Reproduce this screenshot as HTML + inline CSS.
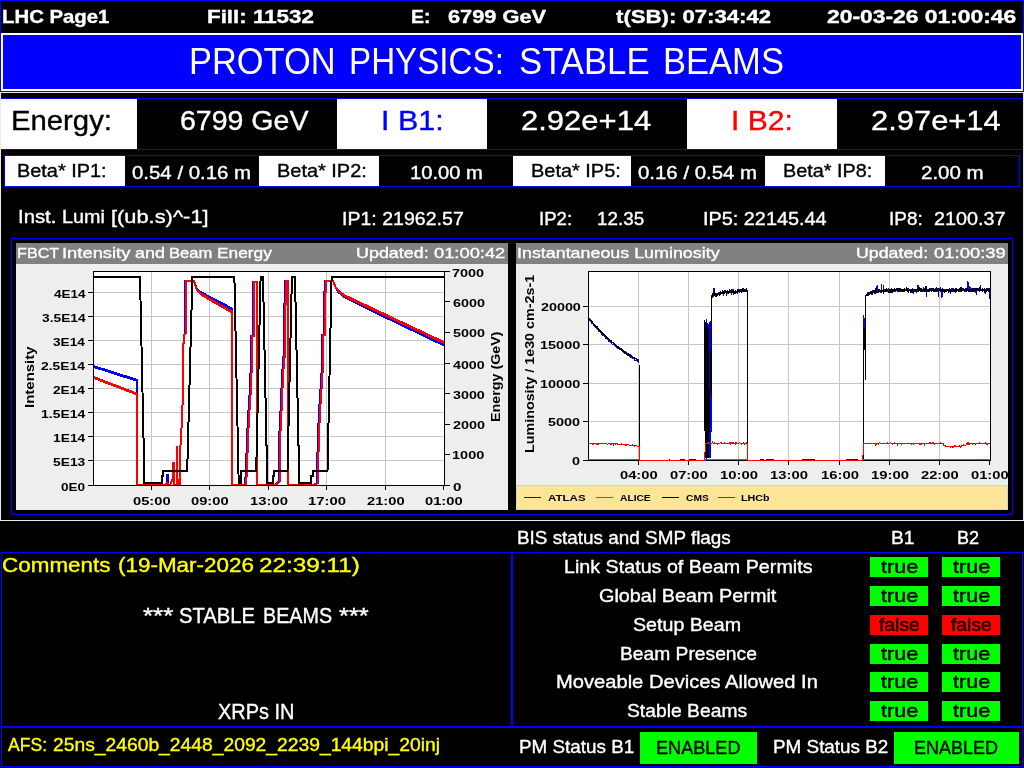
<!DOCTYPE html>
<html><head><meta charset="utf-8"><title>LHC Page1</title>
<style>
html,body{margin:0;padding:0;background:#000;overflow:hidden}
body{width:1024px;height:768px;position:relative;font-family:"Liberation Sans",sans-serif}
.b{position:absolute;box-sizing:content-box}
.t{position:absolute;white-space:pre;line-height:1;transform-origin:0 0;font-family:"Liberation Sans",sans-serif;-webkit-text-stroke:0.35px currentColor}
svg{position:absolute;left:0;top:0}
</style></head><body>
<div class="b " style="left:0px;top:0px;width:1024px;height:92px;background:#00f"></div>
<div class="b " style="left:1px;top:1px;width:1022px;height:32px;background:#000"></div>
<div class="b " style="left:1px;top:33px;width:1018px;height:54px;background:#00f;border:2px solid #fff"></div>
<div class="b " style="left:0px;top:92px;width:1022px;height:427px;background:#000;border:1px solid #e9e9e9"></div>
<div class="b " style="left:1px;top:98px;width:1022px;height:50px;background:#000;border:solid #00f;border-width:1px 0"></div>
<div class="b " style="left:1px;top:99px;width:136px;height:50px;background:#fff"></div>
<div class="b " style="left:337px;top:99px;width:150px;height:50px;background:#fff"></div>
<div class="b " style="left:687px;top:99px;width:150px;height:50px;background:#fff"></div>
<div class="b " style="left:4px;top:155px;width:1014px;height:30px;border:1px solid #00f"></div>
<div class="b " style="left:5px;top:156px;width:120px;height:30px;background:#fff"></div>
<div class="b " style="left:259px;top:156px;width:120px;height:30px;background:#fff"></div>
<div class="b " style="left:513px;top:156px;width:118px;height:30px;background:#fff"></div>
<div class="b " style="left:765px;top:156px;width:120px;height:30px;background:#fff"></div>
<div class="b " style="left:11px;top:238px;width:1000px;height:275px;border:1px solid #00f"></div>
<div class="b " style="left:16px;top:243px;width:492px;height:21px;background:#828082"></div>
<div class="b " style="left:16px;top:264px;width:492px;height:246px;background:#eeeeee"></div>
<div class="b " style="left:516px;top:243px;width:492px;height:21px;background:#828082"></div>
<div class="b " style="left:516px;top:264px;width:492px;height:246px;background:#eeeeee"></div>
<div class="b " style="left:516px;top:485px;width:490px;height:23px;background:#fce596;border:1px solid #c9d3e6"></div>
<div class="b " style="left:1px;top:552px;width:509px;height:173px;border:1px solid #00f"></div>
<div class="b " style="left:1px;top:727px;width:1020px;height:38px;border:1px solid #00f"></div>
<div class="b " style="left:512px;top:552px;width:509px;height:173px;border:1px solid #00f"></div>
<div class="b " style="left:870px;top:557px;width:58px;height:20px;background:#0f0"></div>
<div class="b " style="left:942px;top:557px;width:58px;height:20px;background:#0f0"></div>
<div class="b " style="left:870px;top:586px;width:58px;height:20px;background:#0f0"></div>
<div class="b " style="left:942px;top:586px;width:58px;height:20px;background:#0f0"></div>
<div class="b " style="left:870px;top:615px;width:58px;height:20px;background:#f00"></div>
<div class="b " style="left:942px;top:615px;width:58px;height:20px;background:#f00"></div>
<div class="b " style="left:870px;top:644px;width:58px;height:20px;background:#0f0"></div>
<div class="b " style="left:942px;top:644px;width:58px;height:20px;background:#0f0"></div>
<div class="b " style="left:870px;top:672px;width:58px;height:20px;background:#0f0"></div>
<div class="b " style="left:942px;top:672px;width:58px;height:20px;background:#0f0"></div>
<div class="b " style="left:870px;top:701px;width:58px;height:20px;background:#0f0"></div>
<div class="b " style="left:942px;top:701px;width:58px;height:20px;background:#0f0"></div>
<div class="b " style="left:640px;top:732px;width:117px;height:32px;background:#0f0"></div>
<div class="b " style="left:894px;top:732px;width:125px;height:32px;background:#0f0"></div>
<svg width="1024" height="768" viewBox="0 0 1024 768" shape-rendering="crispEdges">
<g><rect x="93.5" y="271.5" width="351" height="214" fill="#fff" stroke="none"/>
<line x1="94" x2="444" y1="460.5" y2="460.5" stroke="#c6c6c6" stroke-width="1"/>
<line x1="94" x2="444" y1="436.5" y2="436.5" stroke="#c6c6c6" stroke-width="1"/>
<line x1="94" x2="444" y1="412.5" y2="412.5" stroke="#c6c6c6" stroke-width="1"/>
<line x1="94" x2="444" y1="388.5" y2="388.5" stroke="#c6c6c6" stroke-width="1"/>
<line x1="94" x2="444" y1="364.5" y2="364.5" stroke="#c6c6c6" stroke-width="1"/>
<line x1="94" x2="444" y1="340.5" y2="340.5" stroke="#c6c6c6" stroke-width="1"/>
<line x1="94" x2="444" y1="316.5" y2="316.5" stroke="#c6c6c6" stroke-width="1"/>
<line x1="94" x2="444" y1="292.5" y2="292.5" stroke="#c6c6c6" stroke-width="1"/>
<line x1="151.5" x2="151.5" y1="272" y2="485" stroke="#c6c6c6" stroke-width="1"/>
<line x1="209.5" x2="209.5" y1="272" y2="485" stroke="#c6c6c6" stroke-width="1"/>
<line x1="268.5" x2="268.5" y1="272" y2="485" stroke="#c6c6c6" stroke-width="1"/>
<line x1="326.5" x2="326.5" y1="272" y2="485" stroke="#c6c6c6" stroke-width="1"/>
<line x1="385.5" x2="385.5" y1="272" y2="485" stroke="#c6c6c6" stroke-width="1"/>
<polyline points="93.5,366.0 136.5,379.7 136.5,485.0 165.0,485.0 167.0,482.5 169.0,485.0 170.0,485.0 173.0,478.0 173.5,462.5 174.3,462.5 174.5,485.0 176.8,485.0 177.0,446.0 177.6,485.0 179.8,485.0 180.6,440.0 181.9,423.0 183.1,388.0 183.6,335.0 185.3,333.0 185.5,281.0 194.0,281.0 196.6,288.7 201.0,292.2 208.3,296.1 220.0,302.1 232.0,308.6 232.0,485.0 244.6,485.0 245.9,474.0 246.9,439.0 248.4,412.0 249.6,394.0 250.9,364.0 250.9,335.5 253.4,335.5 253.4,281.5 257.2,281.5 257.2,485.0 275.2,485.0 279.0,481.5 279.0,439.0 280.0,424.0 281.2,394.0 282.8,364.0 282.8,357.4 284.0,357.4 284.0,304.2 285.2,304.2 285.2,280.8 288.2,280.8 288.2,485.0 313.4,485.0 317.1,482.8 317.1,469.0 317.8,439.0 319.0,411.5 320.2,394.0 322.1,364.0 322.1,335.0 324.0,335.0 324.0,292.4 325.0,292.4 325.0,280.8 333.1,280.8 335.0,286.2 337.5,290.4 343.8,295.9 353.0,300.8 385.0,316.3 444.0,344.6" fill="none" stroke="#00f" stroke-width="2" /><polyline points="93.5,366.9 136.5,380.6" fill="none" stroke="#00f" stroke-width="2" /><polyline points="196.6,289.6 201.0,293.1 208.3,297.0 220.0,303.0 232.0,309.4" fill="none" stroke="#00f" stroke-width="2" /><polyline points="337.5,291.3 343.8,296.8 353.0,301.6 385.0,317.2 444.0,345.5" fill="none" stroke="#00f" stroke-width="2" />
<rect x="166" y="474" width="3" height="10" fill="#00f"/>
<line x1="172.5" x2="172.5" y1="462" y2="476" stroke="#00f" stroke-width="1.6"/>
<polyline points="93.5,377.0 136.5,393.4 136.5,485.0 165.0,485.0 167.0,482.5 169.0,485.0 170.0,485.0 173.0,478.0 173.5,462.5 174.3,462.5 174.5,485.0 176.8,485.0 177.0,446.0 177.6,485.0 179.8,485.0 180.6,440.0 181.9,423.0 183.1,388.0 183.6,335.0 186.3,333.0 186.5,281.0 194.0,281.0 196.6,289.3 201.0,293.5 208.3,298.0 220.0,304.8 232.0,311.8 232.0,485.0 245.6,485.0 246.9,474.0 247.9,439.0 249.4,412.0 250.6,394.0 251.9,364.0 251.9,335.5 253.8,335.5 253.8,281.5 257.2,281.5 257.2,485.0 276.2,485.0 280.0,481.5 280.0,439.0 281.0,424.0 282.2,394.0 283.8,364.0 283.8,357.4 285.0,357.4 285.0,304.2 286.2,304.2 286.2,280.8 288.2,280.8 288.2,485.0 314.4,485.0 318.1,482.8 318.1,469.0 318.8,439.0 320.0,411.5 321.2,394.0 323.1,364.0 323.1,335.0 325.0,335.0 325.0,292.4 326.0,292.4 326.0,280.8 333.1,280.8 335.0,286.0 337.5,289.9 343.8,294.9 353.0,299.2 385.0,314.3 444.0,342.1" fill="none" stroke="#f00" stroke-width="2" /><polyline points="93.5,377.9 136.5,394.3" fill="none" stroke="#f00" stroke-width="2" /><polyline points="196.6,290.2 201.0,294.4 208.3,298.9 220.0,305.7 232.0,312.6" fill="none" stroke="#f00" stroke-width="2" /><polyline points="337.5,290.8 343.8,295.8 353.0,300.1 385.0,315.2 444.0,343.0" fill="none" stroke="#f00" stroke-width="2" />
<polyline points="93.5,277.0 140.0,277.0 144.5,483.0 162.0,483.0 162.0,476.0 163.0,476.0 163.0,470.5 187.2,470.5 192.4,277.0 234.4,277.0 238.7,483.0 241.2,483.0 241.2,470.5 241.2,470.5 241.2,470.5 256.2,470.5 260.6,277.0 263.0,277.0 267.3,483.0 273.0,483.0 273.0,476.0 274.4,476.0 274.4,470.5 287.5,470.5 291.9,277.0 295.0,277.0 299.3,483.0 311.2,483.0 311.2,476.0 312.5,476.0 312.5,470.5 327.5,470.5 331.6,277.0 444.0,277.0" fill="none" stroke="#000" stroke-width="2" />
<rect x="93.5" y="271.5" width="351" height="214" fill="none" stroke="#000" stroke-width="1"/>
<line x1="88" x2="93" y1="485.5" y2="485.5" stroke="#000"/>
<line x1="88" x2="93" y1="460.5" y2="460.5" stroke="#000"/>
<line x1="88" x2="93" y1="436.5" y2="436.5" stroke="#000"/>
<line x1="88" x2="93" y1="412.5" y2="412.5" stroke="#000"/>
<line x1="88" x2="93" y1="388.5" y2="388.5" stroke="#000"/>
<line x1="88" x2="93" y1="364.5" y2="364.5" stroke="#000"/>
<line x1="88" x2="93" y1="340.5" y2="340.5" stroke="#000"/>
<line x1="88" x2="93" y1="316.5" y2="316.5" stroke="#000"/>
<line x1="88" x2="93" y1="292.5" y2="292.5" stroke="#000"/>
<line x1="445" x2="450" y1="485.5" y2="485.5" stroke="#000"/>
<line x1="445" x2="450" y1="454.5" y2="454.5" stroke="#000"/>
<line x1="445" x2="450" y1="424.5" y2="424.5" stroke="#000"/>
<line x1="445" x2="450" y1="393.5" y2="393.5" stroke="#000"/>
<line x1="445" x2="450" y1="363.5" y2="363.5" stroke="#000"/>
<line x1="445" x2="450" y1="332.5" y2="332.5" stroke="#000"/>
<line x1="445" x2="450" y1="301.5" y2="301.5" stroke="#000"/>
<line x1="445" x2="450" y1="271.5" y2="271.5" stroke="#000"/>
<line x1="151.5" x2="151.5" y1="486" y2="490" stroke="#000"/>
<line x1="209.5" x2="209.5" y1="486" y2="490" stroke="#000"/>
<line x1="268.5" x2="268.5" y1="486" y2="490" stroke="#000"/>
<line x1="326.5" x2="326.5" y1="486" y2="490" stroke="#000"/>
<line x1="385.5" x2="385.5" y1="486" y2="490" stroke="#000"/>
<line x1="443.5" x2="443.5" y1="486" y2="490" stroke="#000"/></g>
<g><rect x="588.5" y="271.5" width="402.0" height="189.0" fill="#fff"/>
<line x1="588.5" x2="990.5" y1="421.5" y2="421.5" stroke="#c6c6c6"/>
<line x1="588.5" x2="990.5" y1="383.5" y2="383.5" stroke="#c6c6c6"/>
<line x1="588.5" x2="990.5" y1="344.5" y2="344.5" stroke="#c6c6c6"/>
<line x1="588.5" x2="990.5" y1="306.5" y2="306.5" stroke="#c6c6c6"/>
<line x1="638.5" x2="638.5" y1="271.5" y2="460.5" stroke="#c6c6c6"/>
<line x1="688.5" x2="688.5" y1="271.5" y2="460.5" stroke="#c6c6c6"/>
<line x1="738.5" x2="738.5" y1="271.5" y2="460.5" stroke="#c6c6c6"/>
<line x1="788.5" x2="788.5" y1="271.5" y2="460.5" stroke="#c6c6c6"/>
<line x1="839.5" x2="839.5" y1="271.5" y2="460.5" stroke="#c6c6c6"/>
<line x1="889.5" x2="889.5" y1="271.5" y2="460.5" stroke="#c6c6c6"/>
<line x1="939.5" x2="939.5" y1="271.5" y2="460.5" stroke="#c6c6c6"/>
<rect x="588.5" y="271.5" width="402.0" height="189.0" fill="none" stroke="#000"/>
<polyline points="589.0,319.6 589.5,320.5 590.0,320.8 590.5,321.4 591.0,322.0 591.5,322.8 592.0,323.4 592.5,323.6 593.0,324.1 593.5,324.6 594.0,325.6 594.5,326.1 595.0,326.7 595.5,327.4 596.0,327.8 596.5,327.9 597.0,328.6 597.5,329.8 598.0,330.1 598.5,330.5 599.0,331.4 599.5,331.6 600.0,331.9 600.5,332.7 601.0,332.7 601.5,333.4 602.0,334.7 602.5,334.1 603.0,335.6 603.5,335.2 604.0,336.2 604.5,336.5 605.0,337.1 605.5,337.7 606.0,338.5 606.5,338.8 607.0,338.9 607.5,339.9 608.0,339.9 608.5,340.4 609.0,341.4 609.5,340.8 610.0,341.7 610.5,342.3 611.0,342.7 611.5,343.3 612.0,344.0 612.5,344.0 613.0,344.5 613.5,344.6 614.0,344.9 614.5,345.3 615.0,346.3 615.5,346.3 616.0,346.8 616.5,347.4 617.0,347.5 617.5,347.9 618.0,348.7 618.5,348.8 619.0,348.9 619.5,349.3 620.0,349.8 620.5,349.8 621.0,350.3 621.5,350.4 622.0,351.1 622.5,351.6 623.0,351.8 623.5,352.6 624.0,352.8 624.5,353.0 625.0,353.4 625.5,353.9 626.0,354.2 626.5,354.7 627.0,354.7 627.5,355.3 628.0,355.5 628.5,355.7 629.0,356.3 629.5,356.2 630.0,356.6 630.5,357.0 631.0,357.4 631.5,357.8 632.0,358.1 632.5,358.1 633.0,358.6 633.5,358.7 634.0,358.9 634.5,359.6 635.0,360.4 635.5,360.1 636.0,359.8 636.5,360.9 637.0,360.9 637.5,360.7 638.0,361.4 638.5,362.0 639.0,361.8 639.5,460.5 706.0,460.5 706.0,318.9 706.1,457.5 706.2,322.0 706.4,457.5 706.5,322.0 706.6,457.5 706.8,323.2 706.9,457.5 707.0,323.7 707.1,457.5 707.2,324.2 707.4,457.5 707.5,323.8 707.6,457.5 707.8,322.7 707.9,457.5 708.0,325.4 708.1,457.5 708.2,324.2 708.4,457.5 708.5,325.2 708.6,457.5 708.8,326.2 708.9,457.5 709.0,325.2 709.1,457.5 709.2,324.3 709.4,457.5 709.5,325.3 709.6,457.5 709.8,323.8 709.9,457.5 710.0,322.4 710.1,457.5 710.2,321.6 710.4,457.5 710.5,322.9 710.6,457.5 710.8,321.2 710.9,457.5 711.5,330.0 711.5,296.1 711.5,295.7 711.8,295.6 712.0,296.4 712.2,296.5 712.5,297.1 712.8,295.6 713.0,295.4 713.2,296.1 713.5,295.5 713.8,294.3 714.0,287.6 714.2,295.4 714.5,295.3 714.8,295.1 715.0,294.5 715.2,294.4 715.5,295.4 715.8,294.2 716.0,294.9 716.2,293.1 716.5,293.9 716.8,294.7 717.0,295.0 717.2,293.0 717.5,295.2 717.8,293.3 718.0,294.7 718.2,293.5 718.5,292.9 718.8,293.6 719.0,293.4 719.2,295.2 719.5,292.1 719.8,293.7 720.0,292.8 720.2,293.9 720.5,292.1 720.8,292.6 721.0,292.0 721.2,293.1 721.5,293.1 721.8,293.5 722.0,293.1 722.2,293.1 722.5,293.1 722.8,293.6 723.0,291.7 723.2,296.2 723.5,292.0 723.8,292.6 724.0,292.3 724.2,293.4 724.5,292.9 724.8,292.6 725.0,293.1 725.2,292.5 725.5,291.5 725.8,291.8 726.0,293.1 726.2,293.2 726.5,292.1 726.8,291.7 727.0,290.8 727.2,290.9 727.5,292.3 727.8,293.3 728.0,292.9 728.2,290.7 728.5,292.5 728.8,292.4 729.0,293.1 729.2,291.1 729.5,289.8 729.8,290.4 730.0,292.8 730.2,291.9 730.5,292.0 730.8,292.2 731.0,292.5 731.2,293.4 731.5,293.9 731.8,290.0 732.0,292.0 732.2,290.2 732.5,291.8 732.8,291.3 733.0,289.3 733.2,291.7 733.5,292.9 733.8,291.9 734.0,290.9 734.2,292.0 734.5,292.7 734.8,291.3 735.0,293.2 735.2,291.3 735.5,291.0 735.8,291.1 736.0,292.1 736.2,292.1 736.5,291.3 736.8,291.5 737.0,292.4 737.2,290.8 737.5,291.1 737.8,292.6 738.0,292.4 738.2,292.0 738.5,290.8 738.8,290.7 739.0,292.4 739.2,291.0 739.5,292.6 739.8,290.6 740.0,291.0 740.2,290.8 740.5,289.7 740.8,290.2 741.0,290.0 741.2,290.7 741.5,290.6 741.8,290.3 742.0,292.2 742.2,290.3 742.5,290.1 742.8,292.2 743.0,291.5 743.2,290.8 743.5,290.0 743.8,291.1 744.0,290.7 744.2,291.0 744.5,290.0 744.8,289.3 745.0,290.4 745.2,291.4 745.5,291.3 745.8,291.1 746.0,289.4 746.2,289.5 746.5,291.5 746.8,290.3 747.0,290.5 747.2,289.6 747.5,460.5 863.5,460.5 863.5,315.0 864.6,322.5 865.6,380.0 865.9,295.5 866.5,295.0 866.8,295.1 867.0,294.7 867.2,295.6 867.5,294.4 867.8,292.9 868.0,292.6 868.2,294.9 868.5,293.4 868.8,295.6 869.0,294.0 869.2,292.8 869.5,293.6 869.8,294.7 870.0,293.8 870.2,291.3 870.5,292.4 870.8,293.6 871.0,291.9 871.2,293.1 871.5,293.3 871.8,292.1 872.0,294.5 872.2,293.5 872.5,291.7 872.8,292.5 873.0,291.7 873.2,293.1 873.5,291.7 873.8,292.5 874.0,292.4 874.2,292.8 874.5,293.0 874.8,290.9 875.0,292.6 875.2,292.0 875.5,291.0 875.8,291.7 876.0,291.0 876.2,286.0 876.5,291.3 876.8,292.3 877.0,292.4 877.2,292.0 877.5,285.3 877.8,292.0 878.0,291.4 878.2,290.2 878.5,292.1 878.8,291.2 879.0,291.4 879.2,292.1 879.5,291.8 879.8,290.9 880.0,291.5 880.2,290.9 880.5,292.7 880.8,290.9 881.0,291.7 881.2,290.4 881.5,290.4 881.8,283.7 882.0,290.7 882.2,291.0 882.5,291.1 882.8,291.3 883.0,290.5 883.2,291.5 883.5,285.4 883.8,289.1 884.0,289.4 884.2,291.0 884.5,290.3 884.8,289.8 885.0,288.8 885.2,290.5 885.5,288.9 885.8,290.0 886.0,291.3 886.2,289.9 886.5,290.7 886.8,289.4 887.0,289.7 887.2,290.7 887.5,291.7 887.8,290.3 888.0,290.1 888.2,289.3 888.5,289.0 888.8,291.6 889.0,289.5 889.2,291.2 889.5,290.8 889.8,290.0 890.0,290.2 890.2,290.4 890.5,290.6 890.8,290.2 891.0,290.3 891.2,290.5 891.5,291.5 891.8,289.1 892.0,289.3 892.2,290.5 892.5,290.6 892.8,292.6 893.0,290.6 893.2,291.1 893.5,290.8 893.8,289.3 894.0,289.4 894.2,289.5 894.5,291.2 894.8,290.8 895.0,289.2 895.2,289.2 895.5,290.0 895.8,289.6 896.0,291.0 896.2,290.1 896.5,289.2 896.8,290.4 897.0,291.0 897.2,289.8 897.5,290.3 897.8,291.5 898.0,289.5 898.2,288.6 898.5,288.8 898.8,292.0 899.0,289.5 899.2,290.3 899.5,289.2 899.8,289.6 900.0,292.2 900.2,290.0 900.5,289.4 900.8,291.6 901.0,290.5 901.2,289.3 901.5,291.3 901.8,290.7 902.0,290.6 902.2,291.0 902.5,291.3 902.8,291.9 903.0,289.9 903.2,289.7 903.5,291.0 903.8,289.0 904.0,291.4 904.2,291.3 904.5,289.0 904.8,290.1 905.0,290.0 905.2,289.5 905.5,289.9 905.8,290.2 906.0,289.1 906.2,290.3 906.5,288.8 906.8,289.9 907.0,290.3 907.2,289.8 907.5,290.7 907.8,290.0 908.0,290.3 908.2,289.2 908.5,288.3 908.8,291.0 909.0,291.2 909.2,290.6 909.5,289.0 909.8,291.3 910.0,290.2 910.2,288.7 910.5,290.3 910.8,289.3 911.0,289.5 911.2,290.6 911.5,291.3 911.8,289.3 912.0,290.5 912.2,287.9 912.5,290.7 912.8,289.1 913.0,289.9 913.2,292.5 913.5,289.5 913.8,289.3 914.0,290.1 914.2,291.1 914.5,290.8 914.8,291.8 915.0,288.6 915.2,290.5 915.5,289.8 915.8,289.7 916.0,290.7 916.2,289.7 916.5,290.8 916.8,290.0 917.0,292.5 917.2,290.1 917.5,290.4 917.8,290.7 918.0,285.0 918.2,290.3 918.5,289.9 918.8,289.9 919.0,291.1 919.2,290.5 919.5,289.9 919.8,291.4 920.0,290.0 920.2,291.4 920.5,290.5 920.8,290.8 921.0,288.4 921.2,289.1 921.5,289.8 921.8,290.7 922.0,290.0 922.2,290.6 922.5,290.6 922.8,290.8 923.0,292.0 923.2,290.0 923.5,290.9 923.8,287.0 924.0,289.3 924.2,290.2 924.5,288.9 924.8,289.0 925.0,290.4 925.2,288.3 925.5,288.8 925.8,291.7 926.0,289.6 926.2,290.1 926.5,290.3 926.8,297.0 927.0,289.7 927.2,291.4 927.5,289.9 927.8,290.9 928.0,290.6 928.2,289.4 928.5,289.5 928.8,289.7 929.0,290.8 929.2,291.7 929.5,289.3 929.8,290.7 930.0,289.9 930.2,289.9 930.5,289.2 930.8,291.0 931.0,289.8 931.2,291.9 931.5,288.1 931.8,289.8 932.0,289.8 932.2,290.1 932.5,289.7 932.8,290.9 933.0,289.9 933.2,290.7 933.5,289.4 933.8,289.5 934.0,290.6 934.2,289.1 934.5,290.9 934.8,290.4 935.0,290.5 935.2,290.2 935.5,290.3 935.8,291.1 936.0,290.2 936.2,289.9 936.5,288.3 936.8,288.7 937.0,290.5 937.2,289.3 937.5,290.7 937.8,290.6 938.0,291.6 938.2,296.8 938.5,290.1 938.8,289.9 939.0,290.9 939.2,289.1 939.5,289.0 939.8,291.4 940.0,289.8 940.2,290.1 940.5,286.9 940.8,288.3 941.0,290.9 941.2,289.0 941.5,290.6 941.8,289.7 942.0,298.1 942.2,288.8 942.5,289.8 942.8,288.3 943.0,290.3 943.2,291.3 943.5,289.9 943.8,289.4 944.0,291.8 944.2,289.4 944.5,289.4 944.8,290.9 945.0,288.9 945.2,289.3 945.5,290.3 945.8,290.4 946.0,291.6 946.2,290.8 946.5,289.5 946.8,291.0 947.0,290.2 947.2,290.2 947.5,289.7 947.8,290.3 948.0,290.6 948.2,289.8 948.5,290.4 948.8,289.4 949.0,289.7 949.2,289.4 949.5,288.9 949.8,289.1 950.0,290.7 950.2,289.7 950.5,290.1 950.8,288.8 951.0,290.1 951.2,289.7 951.5,289.4 951.8,288.3 952.0,292.4 952.2,289.8 952.5,289.2 952.8,290.9 953.0,290.7 953.2,288.3 953.5,289.6 953.8,288.5 954.0,289.2 954.2,290.1 954.5,288.9 954.8,290.8 955.0,289.3 955.2,293.2 955.5,289.3 955.8,289.4 956.0,290.8 956.2,289.6 956.5,288.9 956.8,289.3 957.0,289.7 957.2,289.5 957.5,290.4 957.8,290.2 958.0,290.2 958.2,289.5 958.5,290.0 958.8,291.6 959.0,289.2 959.2,290.7 959.5,290.3 959.8,291.6 960.0,291.5 960.2,289.8 960.5,292.3 960.8,289.4 961.0,290.0 961.2,290.4 961.5,288.6 961.8,289.6 962.0,288.6 962.2,290.8 962.5,289.9 962.8,289.6 963.0,289.4 963.2,291.0 963.5,288.9 963.8,288.5 964.0,290.7 964.2,289.2 964.5,289.5 964.8,289.6 965.0,289.5 965.2,291.7 965.5,289.5 965.8,291.1 966.0,290.3 966.2,290.2 966.5,290.5 966.8,288.5 967.0,290.1 967.2,289.4 967.5,288.9 967.8,288.7 968.0,281.2 968.2,290.2 968.5,289.1 968.8,289.5 969.0,285.6 969.2,290.2 969.5,289.5 969.8,290.4 970.0,289.9 970.2,290.3 970.5,289.1 970.8,290.2 971.0,291.0 971.2,290.1 971.5,290.9 971.8,289.0 972.0,289.5 972.2,290.2 972.5,290.0 972.8,289.4 973.0,289.7 973.2,289.2 973.5,288.7 973.8,289.9 974.0,290.3 974.2,291.7 974.5,291.2 974.8,289.6 975.0,290.2 975.2,287.7 975.5,292.6 975.8,289.3 976.0,290.1 976.2,294.8 976.5,290.1 976.8,290.2 977.0,289.8 977.2,289.3 977.5,290.1 977.8,289.7 978.0,289.7 978.2,290.6 978.5,289.9 978.8,288.5 979.0,289.7 979.2,291.2 979.5,290.7 979.8,290.3 980.0,290.0 980.2,288.8 980.5,290.7 980.8,285.3 981.0,290.3 981.2,289.9 981.5,291.0 981.8,289.1 982.0,288.8 982.2,290.2 982.5,290.8 982.8,288.9 983.0,289.4 983.2,290.5 983.5,290.3 983.8,290.9 984.0,289.2 984.2,291.4 984.5,290.4 984.8,289.9 985.0,289.3 985.2,290.4 985.5,291.2 985.8,291.2 986.0,290.9 986.2,289.0 986.5,290.0 986.8,289.1 987.0,288.9 987.2,291.3 987.5,289.0 987.8,291.0 988.0,291.2 988.2,288.2 988.5,288.8 988.8,290.8 989.0,289.5 989.2,290.5 989.5,289.2 989.8,298.7 990.0,289.7" fill="none" stroke="#00f" stroke-width="1" />
<polyline points="589.0,318.1 589.5,318.7 590.0,319.6 590.5,319.7 591.0,321.2 591.5,321.3 592.0,321.9 592.5,322.7 593.0,323.4 593.5,323.8 594.0,324.4 594.5,324.8 595.0,325.4 595.5,326.0 596.0,326.7 596.5,327.4 597.0,327.6 597.5,328.9 598.0,329.0 598.5,330.0 599.0,330.1 599.5,330.3 600.0,331.0 600.5,331.6 601.0,332.4 601.5,332.5 602.0,333.1 602.5,333.3 603.0,334.0 603.5,334.4 604.0,335.0 604.5,335.0 605.0,335.7 605.5,336.7 606.0,337.2 606.5,337.9 607.0,338.4 607.5,338.0 608.0,338.3 608.5,339.1 609.0,339.8 609.5,339.6 610.0,340.7 610.5,341.1 611.0,341.1 611.5,342.3 612.0,342.2 612.5,342.8 613.0,342.8 613.5,342.8 614.0,344.3 614.5,344.3 615.0,344.4 615.5,344.9 616.0,346.1 616.5,346.2 617.0,346.4 617.5,346.6 618.0,346.8 618.5,347.2 619.0,348.2 619.5,348.7 620.0,349.2 620.5,349.0 621.0,349.0 621.5,349.8 622.0,350.0 622.5,350.6 623.0,351.2 623.5,351.1 624.0,351.7 624.5,352.0 625.0,352.0 625.5,352.9 626.0,352.7 626.5,352.9 627.0,353.5 627.5,354.2 628.0,354.1 628.5,355.2 629.0,355.2 629.5,355.2 630.0,355.1 630.5,356.0 631.0,355.9 631.5,356.8 632.0,356.5 632.5,357.5 633.0,358.0 633.5,357.6 634.0,358.2 634.5,358.7 635.0,358.4 635.5,358.5 636.0,359.2 636.5,359.1 637.0,359.4 637.5,359.7 638.0,360.4 638.5,360.6 639.0,360.9 639.5,460.5 704.0,460.5 704.0,320.1 704.1,457.5 704.2,321.9 704.4,457.5 704.5,321.7 704.6,457.5 704.8,321.7 704.9,457.5 705.0,322.4 705.1,457.5 705.2,323.5 705.4,457.5 705.5,323.5 705.6,457.5 705.8,324.1 705.9,457.5 706.0,324.1 706.1,457.5 706.2,325.9 706.4,457.5 706.5,326.1 706.6,457.5 706.8,327.3 706.9,457.5 707.0,327.8 707.1,457.5 707.2,327.2 707.4,457.5 707.5,329.7 707.6,457.5 707.8,327.5 707.9,457.5 708.0,329.2 708.1,457.5 708.2,329.3 708.4,457.5 711.5,330.0 711.5,296.1 711.5,297.6 711.8,297.4 712.0,297.1 712.2,295.5 712.5,295.4 712.8,293.4 713.0,294.3 713.2,296.0 713.5,294.0 713.8,294.2 714.0,294.4 714.2,294.3 714.5,290.5 714.8,293.6 715.0,294.3 715.2,295.5 715.5,294.0 715.8,293.9 716.0,297.1 716.2,295.6 716.5,293.7 716.8,293.2 717.0,294.2 717.2,293.3 717.5,294.1 717.8,293.2 718.0,293.2 718.2,294.0 718.5,293.7 718.8,295.4 719.0,293.0 719.2,295.3 719.5,296.0 719.8,292.1 720.0,293.7 720.2,294.6 720.5,294.5 720.8,292.9 721.0,294.0 721.2,292.1 721.5,294.4 721.8,293.1 722.0,294.1 722.2,292.8 722.5,292.9 722.8,291.5 723.0,292.1 723.2,293.6 723.5,292.2 723.8,293.0 724.0,293.5 724.2,293.4 724.5,291.3 724.8,293.0 725.0,290.4 725.2,291.4 725.5,292.1 725.8,290.8 726.0,291.4 726.2,293.1 726.5,292.9 726.8,295.8 727.0,291.7 727.2,292.6 727.5,291.6 727.8,292.0 728.0,291.6 728.2,292.9 728.5,293.1 728.8,291.8 729.0,291.8 729.2,292.2 729.5,292.1 729.8,292.3 730.0,291.5 730.2,290.9 730.5,291.1 730.8,293.2 731.0,292.3 731.2,289.5 731.5,291.6 731.8,291.6 732.0,292.9 732.2,291.1 732.5,291.5 732.8,291.5 733.0,290.9 733.2,292.8 733.5,292.3 733.8,290.9 734.0,291.0 734.2,292.9 734.5,293.0 734.8,292.8 735.0,293.4 735.2,293.4 735.5,293.1 735.8,292.2 736.0,292.4 736.2,290.6 736.5,292.5 736.8,292.5 737.0,292.7 737.2,289.4 737.5,292.0 737.8,289.7 738.0,290.4 738.2,291.8 738.5,291.3 738.8,289.2 739.0,291.3 739.2,290.3 739.5,290.4 739.8,291.4 740.0,291.5 740.2,291.5 740.5,290.6 740.8,291.5 741.0,291.7 741.2,293.2 741.5,291.4 741.8,290.4 742.0,289.6 742.2,292.0 742.5,291.9 742.8,290.8 743.0,287.6 743.2,291.8 743.5,291.4 743.8,290.5 744.0,291.9 744.2,290.7 744.5,290.3 744.8,292.2 745.0,290.3 745.2,291.2 745.5,290.8 745.8,292.0 746.0,291.1 746.2,290.5 746.5,291.1 746.8,288.4 747.0,290.9 747.2,291.7 747.5,460.5 863.5,460.5 863.5,328.0 864.6,329.0 865.6,380.0 865.9,295.5 866.5,295.5 866.8,294.3 867.0,295.4 867.2,295.4 867.5,294.5 867.8,294.1 868.0,294.3 868.2,292.1 868.5,293.6 868.8,294.1 869.0,294.1 869.2,293.0 869.5,293.3 869.8,294.4 870.0,293.1 870.2,293.5 870.5,293.8 870.8,293.5 871.0,291.3 871.2,293.7 871.5,293.4 871.8,292.2 872.0,292.5 872.2,293.4 872.5,292.9 872.8,293.4 873.0,293.1 873.2,290.5 873.5,291.7 873.8,291.4 874.0,291.8 874.2,293.7 874.5,291.7 874.8,292.5 875.0,291.1 875.2,292.3 875.5,292.6 875.8,293.4 876.0,288.0 876.2,292.4 876.5,292.4 876.8,291.1 877.0,291.2 877.2,291.5 877.5,291.7 877.8,291.4 878.0,291.0 878.2,291.1 878.5,290.3 878.8,292.0 879.0,291.9 879.2,290.3 879.5,291.7 879.8,288.6 880.0,290.6 880.2,291.5 880.5,290.1 880.8,292.4 881.0,291.3 881.2,290.5 881.5,291.4 881.8,290.1 882.0,290.6 882.2,290.5 882.5,291.5 882.8,291.7 883.0,289.7 883.2,291.4 883.5,289.8 883.8,292.1 884.0,291.7 884.2,291.0 884.5,289.9 884.8,289.4 885.0,289.5 885.2,290.1 885.5,290.3 885.8,291.5 886.0,290.7 886.2,290.3 886.5,289.6 886.8,291.9 887.0,289.8 887.2,290.8 887.5,289.6 887.8,289.7 888.0,290.4 888.2,289.7 888.5,291.5 888.8,289.6 889.0,292.6 889.2,291.9 889.5,291.1 889.8,291.6 890.0,289.5 890.2,289.8 890.5,289.9 890.8,290.5 891.0,293.0 891.2,291.3 891.5,290.3 891.8,292.1 892.0,289.0 892.2,291.5 892.5,291.3 892.8,288.8 893.0,291.8 893.2,290.1 893.5,291.6 893.8,289.1 894.0,289.0 894.2,288.5 894.5,289.5 894.8,289.3 895.0,290.7 895.2,290.0 895.5,291.0 895.8,290.3 896.0,290.4 896.2,289.7 896.5,289.8 896.8,289.3 897.0,289.0 897.2,288.3 897.5,290.3 897.8,291.0 898.0,289.0 898.2,289.5 898.5,288.3 898.8,290.3 899.0,290.7 899.2,289.8 899.5,289.8 899.8,290.9 900.0,288.5 900.2,291.5 900.5,289.7 900.8,290.4 901.0,290.3 901.2,288.6 901.5,290.5 901.8,289.1 902.0,290.8 902.2,289.3 902.5,289.5 902.8,292.4 903.0,289.5 903.2,289.9 903.5,289.3 903.8,289.1 904.0,291.4 904.2,289.8 904.5,291.2 904.8,289.3 905.0,289.7 905.2,289.8 905.5,290.0 905.8,289.9 906.0,289.7 906.2,287.2 906.5,290.5 906.8,290.5 907.0,289.9 907.2,291.8 907.5,287.6 907.8,289.1 908.0,290.3 908.2,290.6 908.5,292.7 908.8,290.7 909.0,290.5 909.2,289.7 909.5,290.0 909.8,288.8 910.0,290.6 910.2,292.6 910.5,289.8 910.8,291.4 911.0,288.7 911.2,291.7 911.5,290.0 911.8,290.2 912.0,289.0 912.2,290.2 912.5,291.1 912.8,289.7 913.0,291.5 913.2,289.7 913.5,290.1 913.8,293.8 914.0,289.6 914.2,289.6 914.5,289.7 914.8,290.3 915.0,289.9 915.2,289.8 915.5,291.7 915.8,290.7 916.0,291.0 916.2,290.4 916.5,290.3 916.8,289.2 917.0,290.9 917.2,290.1 917.5,291.3 917.8,290.0 918.0,289.5 918.2,291.7 918.5,290.1 918.8,288.7 919.0,288.9 919.2,291.0 919.5,288.2 919.8,288.6 920.0,290.5 920.2,288.5 920.5,289.7 920.8,290.9 921.0,289.9 921.2,291.0 921.5,290.5 921.8,288.3 922.0,291.5 922.2,290.3 922.5,289.5 922.8,289.4 923.0,289.7 923.2,290.8 923.5,290.5 923.8,289.9 924.0,290.8 924.2,289.9 924.5,291.9 924.8,289.5 925.0,289.5 925.2,288.0 925.5,290.8 925.8,291.6 926.0,286.0 926.2,290.5 926.5,289.0 926.8,289.6 927.0,289.7 927.2,289.5 927.5,289.5 927.8,291.4 928.0,290.6 928.2,288.6 928.5,290.4 928.8,291.3 929.0,290.6 929.2,290.0 929.5,291.8 929.8,287.9 930.0,289.8 930.2,290.2 930.5,290.8 930.8,290.8 931.0,290.5 931.2,289.0 931.5,289.0 931.8,288.5 932.0,290.1 932.2,290.5 932.5,289.7 932.8,287.9 933.0,289.5 933.2,288.5 933.5,290.9 933.8,290.6 934.0,290.5 934.2,289.9 934.5,291.4 934.8,291.3 935.0,291.1 935.2,288.7 935.5,288.6 935.8,291.0 936.0,289.8 936.2,289.9 936.5,291.0 936.8,291.5 937.0,290.6 937.2,290.8 937.5,290.3 937.8,290.5 938.0,287.9 938.2,290.0 938.5,290.4 938.8,290.9 939.0,290.8 939.2,289.5 939.5,290.1 939.8,289.6 940.0,289.9 940.2,289.3 940.5,290.3 940.8,289.4 941.0,290.3 941.2,289.0 941.5,291.0 941.8,290.5 942.0,288.9 942.2,291.0 942.5,289.6 942.8,288.9 943.0,289.5 943.2,290.0 943.5,291.1 943.8,290.4 944.0,290.5 944.2,292.8 944.5,292.1 944.8,290.9 945.0,290.6 945.2,290.8 945.5,291.3 945.8,290.0 946.0,290.9 946.2,291.2 946.5,291.2 946.8,289.3 947.0,289.1 947.2,289.8 947.5,290.9 947.8,289.1 948.0,290.5 948.2,289.1 948.5,293.0 948.8,289.3 949.0,291.8 949.2,290.8 949.5,288.7 949.8,288.4 950.0,289.9 950.2,293.5 950.5,291.0 950.8,290.2 951.0,289.7 951.2,290.5 951.5,290.5 951.8,290.1 952.0,291.9 952.2,289.6 952.5,291.0 952.8,288.6 953.0,289.2 953.2,289.4 953.5,291.5 953.8,290.1 954.0,288.9 954.2,289.9 954.5,291.9 954.8,291.7 955.0,290.2 955.2,288.3 955.5,290.7 955.8,291.8 956.0,290.3 956.2,290.7 956.5,288.8 956.8,289.9 957.0,289.9 957.2,290.1 957.5,290.4 957.8,289.7 958.0,289.6 958.2,289.5 958.5,291.5 958.8,292.0 959.0,289.4 959.2,289.1 959.5,290.2 959.8,290.2 960.0,288.5 960.2,290.2 960.5,288.0 960.8,288.7 961.0,290.7 961.2,289.8 961.5,288.9 961.8,290.0 962.0,291.5 962.2,288.1 962.5,289.6 962.8,289.3 963.0,289.4 963.2,290.6 963.5,290.0 963.8,291.3 964.0,290.0 964.2,289.0 964.5,292.0 964.8,290.3 965.0,290.0 965.2,288.2 965.5,290.3 965.8,289.0 966.0,289.2 966.2,288.3 966.5,290.7 966.8,290.2 967.0,289.6 967.2,289.3 967.5,288.8 967.8,289.3 968.0,290.5 968.2,289.5 968.5,291.4 968.8,291.2 969.0,290.7 969.2,291.2 969.5,290.3 969.8,290.5 970.0,290.7 970.2,289.7 970.5,289.3 970.8,289.2 971.0,292.2 971.2,288.6 971.5,292.0 971.8,290.4 972.0,291.5 972.2,290.6 972.5,289.3 972.8,290.2 973.0,289.8 973.2,289.8 973.5,291.9 973.8,288.1 974.0,289.9 974.2,289.2 974.5,288.8 974.8,290.7 975.0,290.8 975.2,289.1 975.5,291.0 975.8,288.5 976.0,290.5 976.2,290.1 976.5,287.8 976.8,289.4 977.0,289.4 977.2,289.4 977.5,290.2 977.8,288.0 978.0,289.9 978.2,290.4 978.5,289.5 978.8,289.7 979.0,289.7 979.2,290.5 979.5,287.7 979.8,292.1 980.0,287.3 980.2,289.8 980.5,288.9 980.8,288.0 981.0,291.2 981.2,289.2 981.5,289.3 981.8,289.9 982.0,290.3 982.2,290.0 982.5,291.2 982.8,291.4 983.0,289.0 983.2,289.5 983.5,289.6 983.8,289.2 984.0,290.0 984.2,290.5 984.5,293.0 984.8,289.8 985.0,290.1 985.2,290.9 985.5,289.9 985.8,292.5 986.0,292.1 986.2,290.9 986.5,288.5 986.8,290.0 987.0,290.4 987.2,289.9 987.5,290.0 987.8,291.0 988.0,288.7 988.2,289.1 988.5,289.7 988.8,290.8 989.0,290.2 989.2,290.7 989.5,290.4 989.8,288.1 990.0,290.2" fill="none" stroke="#000" stroke-width="1" />
<polyline points="589.0,318.3 589.5,318.3 590.0,319.2 590.5,319.4 591.0,320.0 591.5,320.7 592.0,321.3 592.5,322.1 593.0,322.9 593.5,323.1 594.0,323.8 594.5,324.4 595.0,324.6 595.5,325.8 596.0,326.1 596.5,326.7 597.0,326.4 597.5,327.7 598.0,328.5 598.5,328.6 599.0,329.3 599.5,329.5 600.0,330.5 600.5,330.9 601.0,331.2 601.5,332.0 602.0,332.0 602.5,332.9 603.0,333.6 603.5,333.8 604.0,334.4 604.5,334.6 605.0,335.3 605.5,335.7 606.0,336.5 606.5,336.7 607.0,337.0 607.5,337.7 608.0,338.1 608.5,338.7 609.0,339.0 609.5,339.5 610.0,340.1 610.5,340.3 611.0,340.7 611.5,341.1 612.0,341.9 612.5,342.3 613.0,342.6 613.5,343.3 614.0,343.5 614.5,343.8 615.0,344.6 615.5,344.8 616.0,345.1 616.5,345.4 617.0,345.9 617.5,346.4 618.0,346.7 618.5,346.9 619.0,347.1 619.5,347.5 620.0,348.3 620.5,348.5 621.0,349.1 621.5,349.0 622.0,349.4 622.5,349.9 623.0,350.4 623.5,350.7 624.0,350.8 624.5,351.2 625.0,351.8 625.5,351.9 626.0,352.6 626.5,352.7 627.0,353.1 627.5,353.3 628.0,353.1 628.5,353.9 629.0,354.3 629.5,354.8 630.0,354.7 630.5,355.0 631.0,355.3 631.5,356.0 632.0,356.1 632.5,356.5 633.0,356.9 633.5,357.2 634.0,357.2 634.5,357.6 635.0,358.1 635.5,358.7 636.0,358.3 636.5,358.9 637.0,358.9 637.5,359.5 638.0,359.7 638.5,359.8 639.0,360.1" fill="none" stroke="#000" stroke-width="1" />
<line x1="711.5" x2="711.5" y1="296" y2="396" stroke="#000"/>
<line x1="704.5" x2="704.5" y1="431" y2="458" stroke="#fff"/>
<line x1="680" x2="685" y1="459.5" y2="459.5" stroke="#00f"/>
<line x1="688.5" x2="696" y1="459.5" y2="459.5" stroke="#00f"/>
<line x1="766" x2="773.5" y1="459.5" y2="459.5" stroke="#00f"/>
<line x1="802" x2="810" y1="459.5" y2="459.5" stroke="#00f"/>
<line x1="846" x2="855" y1="459.5" y2="459.5" stroke="#00f"/>
<line x1="760" x2="764" y1="459.5" y2="459.5" stroke="#000"/>
<line x1="669" x2="670" y1="459.5" y2="459.5" stroke="#000"/>
<line x1="810" x2="814.5" y1="459.5" y2="459.5" stroke="#000"/>
<line x1="855" x2="858" y1="459.5" y2="459.5" stroke="#000"/>
<line x1="589" x2="639" y1="459.5" y2="459.5" stroke="#f0f" stroke-width="1"/>
<line x1="705" x2="747" y1="459.5" y2="459.5" stroke="#f0f" stroke-width="1"/>
<line x1="863" x2="990" y1="459.5" y2="459.5" stroke="#f0f" stroke-width="1"/>
<polyline points="589.0,443.2 589.5,443.7 590.0,443.1 590.5,443.6 591.0,443.2 591.5,443.1 592.0,444.1 592.5,443.9 593.0,444.5 593.5,443.5 594.0,443.6 594.5,443.7 595.0,443.7 595.5,443.8 596.0,443.0 596.5,443.8 597.0,443.1 597.5,443.6 598.0,444.8 598.5,443.6 599.0,443.5 599.5,443.8 600.0,443.6 600.5,443.2 601.0,444.3 601.5,443.4 602.0,443.9 602.5,443.4 603.0,444.0 603.5,443.8 604.0,443.9 604.5,443.8 605.0,443.8 605.5,443.8 606.0,443.7 606.5,443.4 607.0,443.8 607.5,444.1 608.0,443.9 608.5,443.8 609.0,444.2 609.5,443.5 610.0,443.7 610.5,443.9 611.0,444.5 611.5,444.2 612.0,443.6 612.5,443.3 613.0,444.0 613.0,443.8 613.5,443.5 614.0,443.9 614.5,443.3 615.0,443.6 615.5,444.2 616.0,443.6 616.5,443.9 617.0,443.4 617.5,444.3 618.0,443.9 618.5,444.8 619.0,444.4 619.5,444.2 620.0,444.8 620.5,444.5 621.0,444.8 621.5,444.0 622.0,444.3 622.5,444.7 623.0,444.5 623.5,444.6 624.0,444.7 624.5,444.6 625.0,444.7 625.5,445.2 626.0,444.9 626.5,445.0 627.0,445.1 627.5,444.9 628.0,444.5 628.5,444.7 629.0,445.2 629.5,445.5 630.0,445.4 630.5,445.3 631.0,445.0 631.5,445.2 632.0,445.8 632.5,445.2 633.0,445.8 633.5,445.5 634.0,445.5 634.5,446.1 635.0,446.0 635.5,445.8 636.0,445.7 636.5,445.5 637.0,446.2 637.5,446.4 638.0,446.2 638.5,446.1 639.0,445.9 639.5,460.5 704.5,460.5 705.5,443.5 706.0,443.3 706.5,443.4 707.0,443.4 707.5,443.6 708.0,442.4 708.5,443.6 709.0,443.5 709.5,443.8 710.0,443.6 710.5,443.0 711.0,443.6 711.5,443.7 712.0,443.0 712.5,442.2 713.0,443.0 713.5,443.4 714.0,442.9 714.5,442.9 715.0,443.8 715.5,443.2 716.0,443.4 716.5,443.2 717.0,443.0 717.5,444.0 718.0,443.2 718.5,443.3 719.0,443.4 719.5,443.4 720.0,442.9 720.5,442.8 721.0,443.2 721.5,443.0 722.0,443.8 722.5,443.3 723.0,443.2 723.5,443.7 724.0,442.7 724.5,442.8 725.0,443.5 725.5,443.2 726.0,443.6 726.5,443.7 727.0,442.9 727.5,443.7 728.0,443.8 728.5,443.1 729.0,443.2 729.5,442.5 730.0,443.5 730.5,444.2 731.0,442.5 731.5,443.1 732.0,443.6 732.5,443.0 733.0,442.6 733.5,443.1 734.0,443.4 734.5,443.1 735.0,442.9 735.5,444.0 736.0,442.6 736.5,443.2 737.0,443.8 737.5,443.1 738.0,443.4 738.5,443.8 739.0,442.9 739.5,442.9 740.0,443.1 740.5,443.7 741.0,443.5 741.5,444.1 742.0,443.0 742.5,443.2 743.0,443.2 743.5,443.2 744.0,442.6 744.5,443.8 745.0,443.2 745.5,443.1 746.0,444.3 746.5,443.0 747.0,443.6 747.5,460.5 862.5,460.5 864.0,443.6 864.5,443.8 865.0,443.2 865.5,443.6 866.0,443.7 866.5,443.4 867.0,443.6 867.5,443.8 868.0,443.2 868.5,443.9 869.0,443.8 869.5,443.8 870.0,443.1 870.5,443.4 871.0,443.3 871.5,443.5 872.0,443.2 872.5,443.1 873.0,443.7 873.5,443.3 874.0,443.8 874.5,443.3 875.0,443.8 875.5,444.9 876.0,443.5 876.5,444.1 877.0,443.7 877.5,443.1 878.0,443.0 878.5,443.8 879.0,443.1 879.5,442.7 880.0,442.8 880.5,443.5 881.0,443.6 881.5,443.6 882.0,443.0 882.5,443.3 883.0,443.6 883.5,443.7 884.0,443.7 884.5,443.4 885.0,442.8 885.5,443.7 886.0,443.1 886.5,443.5 887.0,443.3 887.5,442.8 888.0,443.5 888.5,443.1 889.0,443.4 889.5,443.5 890.0,443.3 890.5,442.7 891.0,443.1 891.5,443.2 892.0,443.5 892.5,444.4 893.0,443.7 893.5,443.1 894.0,443.3 894.5,442.9 895.0,443.5 895.5,443.3 896.0,443.9 896.5,443.5 897.0,443.6 897.5,444.5 898.0,443.2 898.5,443.1 899.0,444.1 899.5,443.5 900.0,443.6 900.5,443.5 901.0,443.5 901.5,443.9 902.0,443.4 902.5,443.6 903.0,443.0 903.5,443.4 904.0,444.1 904.5,443.5 905.0,442.9 905.5,443.1 906.0,443.7 906.5,443.9 907.0,443.4 907.5,443.4 908.0,443.0 908.5,443.4 909.0,443.2 909.5,443.1 910.0,443.5 910.5,443.6 911.0,443.9 911.5,444.1 912.0,443.5 912.5,443.4 913.0,444.3 913.5,443.9 914.0,443.8 914.5,443.4 915.0,443.4 915.5,443.1 916.0,443.3 916.5,443.4 917.0,443.5 917.5,443.6 918.0,442.9 918.5,443.7 919.0,443.1 919.5,443.3 920.0,444.5 920.5,443.5 921.0,444.1 921.5,444.1 922.0,443.3 922.5,443.7 923.0,443.0 923.5,443.2 924.0,443.5 924.5,444.6 925.0,443.6 925.5,443.5 926.0,443.4 926.5,443.4 927.0,444.0 927.5,443.8 928.0,443.2 928.5,443.8 929.0,443.5 929.5,442.7 930.0,443.7 930.5,443.0 931.0,443.2 931.5,443.6 932.0,442.8 932.5,442.5 933.0,443.5 933.5,442.6 934.0,444.2 934.5,444.0 935.0,443.1 935.5,443.3 936.0,443.5 936.5,443.3 937.0,443.8 937.5,443.7 938.0,443.5 938.5,443.7 939.0,443.4 939.5,443.6 940.0,444.3 940.5,443.0 941.0,443.6 941.5,443.2 942.0,444.3 942.5,443.2 943.0,443.2 943.5,445.3 944.0,445.2 944.5,445.5 945.0,445.3 945.5,446.1 946.0,446.7 946.5,446.3 947.0,446.0 947.5,446.4 948.0,446.5 948.5,446.4 949.0,446.6 949.5,446.6 950.0,447.0 950.5,447.1 951.0,446.6 951.5,446.6 952.0,446.1 952.5,446.7 953.0,447.4 953.5,446.7 954.0,446.7 954.5,446.2 955.0,447.1 955.5,446.3 956.0,447.2 956.5,446.1 957.0,446.2 957.5,446.7 958.0,446.6 958.5,446.1 959.0,445.8 959.5,446.2 960.0,445.7 960.5,447.0 961.0,446.4 961.5,446.4 962.0,445.4 962.5,445.2 963.0,445.2 963.5,445.0 964.0,445.1 964.5,445.6 965.0,445.1 965.5,445.3 966.0,444.8 966.5,444.0 967.0,443.4 967.5,444.3 968.0,442.5 968.5,443.2 969.0,444.4 969.5,443.8 970.0,443.0 970.5,443.4 971.0,443.3 971.5,443.3 972.0,443.0 972.5,444.0 973.0,443.6 973.5,443.7 974.0,443.8 974.5,443.1 975.0,443.4 975.5,444.0 976.0,444.2 976.5,443.5 977.0,443.8 977.5,443.7 978.0,443.1 978.5,443.6 979.0,443.7 979.5,443.2 980.0,443.7 980.5,443.4 981.0,443.0 981.5,443.4 982.0,443.4 982.5,443.8 983.0,442.9 983.5,443.6 984.0,443.8 984.5,443.7 985.0,443.8 985.5,443.0 986.0,443.4 986.5,443.2 987.0,444.7 987.5,443.6 988.0,443.3 988.5,443.3 989.0,443.4 989.5,443.8 990.0,443.5" fill="none" stroke="#f00" stroke-width="1" />
<line x1="589" x2="639" y1="459.5" y2="459.5" stroke="#f0f" stroke-width="1"/>
<line x1="705" x2="747" y1="459.5" y2="459.5" stroke="#f0f" stroke-width="1"/>
<line x1="863" x2="990" y1="459.5" y2="459.5" stroke="#f0f" stroke-width="1"/>
<line x1="583" x2="588" y1="460.5" y2="460.5" stroke="#000"/>
<line x1="583" x2="588" y1="421.5" y2="421.5" stroke="#000"/>
<line x1="583" x2="588" y1="383.5" y2="383.5" stroke="#000"/>
<line x1="583" x2="588" y1="344.5" y2="344.5" stroke="#000"/>
<line x1="583" x2="588" y1="306.5" y2="306.5" stroke="#000"/>
<line x1="638.5" x2="638.5" y1="461" y2="465" stroke="#000"/>
<line x1="688.5" x2="688.5" y1="461" y2="465" stroke="#000"/>
<line x1="738.5" x2="738.5" y1="461" y2="465" stroke="#000"/>
<line x1="788.5" x2="788.5" y1="461" y2="465" stroke="#000"/>
<line x1="839.5" x2="839.5" y1="461" y2="465" stroke="#000"/>
<line x1="889.5" x2="889.5" y1="461" y2="465" stroke="#000"/>
<line x1="939.5" x2="939.5" y1="461" y2="465" stroke="#000"/>
<line x1="989.5" x2="989.5" y1="461" y2="465" stroke="#000"/>
<line x1="524" x2="541" y1="497.5" y2="497.5" stroke="#00f"/>
<line x1="596" x2="613" y1="497.5" y2="497.5" stroke="#f0f"/>
<line x1="662" x2="679" y1="497.5" y2="497.5" stroke="#000"/>
<line x1="718" x2="735" y1="497.5" y2="497.5" stroke="#f00"/></g>
</svg>
<div id="txt" style="position:absolute;left:0;top:0;width:1024px;height:768px;will-change:transform">
<span class="t" style="left:2.03px;top:9px;font-size:17.9px;color:#fff;font-weight:bold;transform:scaleX(1.1374)">LHC Page1</span>
<span class="t" style="left:207.20px;top:9px;font-size:17.9px;color:#fff;font-weight:bold;transform:scaleX(1.2498)">Fill: 11532</span>
<span class="t" style="left:411.19px;top:9px;font-size:17.9px;color:#fff;font-weight:bold;transform:scaleX(1.0853)">E:</span>
<span class="t" style="left:448.32px;top:9px;font-size:17.9px;color:#fff;font-weight:bold;transform:scaleX(1.2179)">6799 GeV</span>
<span class="t" style="left:616.40px;top:9px;font-size:17.9px;color:#fff;font-weight:bold;transform:scaleX(1.2379)">t(SB): 07:34:42</span>
<span class="t" style="left:826.79px;top:9px;font-size:17.9px;color:#fff;font-weight:bold;transform:scaleX(1.2772)">20-03-26 01:00:46</span>
<span class="t" style="left:189.11px;top:44px;font-size:36.8px;color:#fff;-webkit-text-stroke:0;transform:scaleX(0.9358)">PROTON</span>
<span class="t" style="left:349.41px;top:44px;font-size:36.8px;color:#fff;-webkit-text-stroke:0;transform:scaleX(0.9017)">PHYSICS:</span>
<span class="t" style="left:518.92px;top:44px;font-size:36.8px;color:#fff;-webkit-text-stroke:0;transform:scaleX(0.9433)">STABLE</span>
<span class="t" style="left:662.80px;top:44px;font-size:36.8px;color:#fff;-webkit-text-stroke:0;transform:scaleX(0.9388)">BEAMS</span>
<span class="t" style="left:11.31px;top:108px;font-size:27px;color:#000;transform:scaleX(1.0847)">Energy:</span>
<span class="t" style="left:179.96px;top:108px;font-size:27px;color:#fff;transform:scaleX(1.0560)">6799 GeV</span>
<span class="t" style="left:380.62px;top:108px;font-size:27px;color:#00f;transform:scaleX(1.1279)">I B1:</span>
<span class="t" style="left:520.55px;top:108px;font-size:27px;color:#fff;transform:scaleX(1.1487)">2.92e+14</span>
<span class="t" style="left:730.95px;top:108px;font-size:27px;color:#f00;transform:scaleX(1.1122)">I B2:</span>
<span class="t" style="left:871.05px;top:108px;font-size:27px;color:#fff;transform:scaleX(1.1442)">2.97e+14</span>
<span class="t" style="left:17.25px;top:163px;font-size:17.7px;color:#000;transform:scaleX(1.1236)">Beta* IP1:</span>
<span class="t" style="left:131.86px;top:165px;font-size:17.7px;color:#fff;transform:scaleX(1.1537)">0.54 / 0.16 m</span>
<span class="t" style="left:276.94px;top:163px;font-size:17.7px;color:#000;transform:scaleX(1.1275)">Beta* IP2:</span>
<span class="t" style="left:409.74px;top:165px;font-size:17.7px;color:#fff;transform:scaleX(1.1383)">10.00 m</span>
<span class="t" style="left:530.94px;top:163px;font-size:17.7px;color:#000;transform:scaleX(1.1275)">Beta* IP5:</span>
<span class="t" style="left:638.36px;top:165px;font-size:17.7px;color:#fff;transform:scaleX(1.1537)">0.16 / 0.54 m</span>
<span class="t" style="left:783.45px;top:163px;font-size:17.7px;color:#000;transform:scaleX(1.1210)">Beta* IP8:</span>
<span class="t" style="left:920.84px;top:165px;font-size:17.7px;color:#fff;transform:scaleX(1.1592)">2.00 m</span>
<span class="t" style="left:17.91px;top:209px;font-size:17.9px;color:#fff;transform:scaleX(1.1360)">Inst.</span>
<span class="t" style="left:62.26px;top:209px;font-size:17.9px;color:#fff;transform:scaleX(1.1044)">Lumi</span>
<span class="t" style="left:111.13px;top:209px;font-size:17.9px;color:#fff;transform:scaleX(1.2204)">[(ub.s)^-1]</span>
<span class="t" style="left:342.47px;top:211px;font-size:17.9px;color:#fff;transform:scaleX(1.0928)">IP1: 21962.57</span>
<span class="t" style="left:538.54px;top:211px;font-size:17.9px;color:#fff;transform:scaleX(1.0408)">IP2:</span>
<span class="t" style="left:597.22px;top:211px;font-size:17.9px;color:#fff;transform:scaleX(1.0524)">12.35</span>
<span class="t" style="left:703.05px;top:211px;font-size:17.9px;color:#fff;transform:scaleX(1.1092)">IP5: 22145.44</span>
<span class="t" style="left:888.52px;top:211px;font-size:17.9px;color:#fff;transform:scaleX(1.0581)">IP8:</span>
<span class="t" style="left:933.87px;top:211px;font-size:17.9px;color:#fff;transform:scaleX(1.1055)">2100.37</span>
<span class="t" style="left:17.34px;top:246px;font-size:14.4px;color:#fff;transform:scaleX(1.1235)">FBCT</span>
<span class="t" style="left:62.06px;top:246px;font-size:14.4px;color:#fff;transform:scaleX(1.2761)">Intensity</span>
<span class="t" style="left:135.44px;top:246px;font-size:14.4px;color:#fff;transform:scaleX(1.2430)">and</span>
<span class="t" style="left:169.20px;top:246px;font-size:14.4px;color:#fff;transform:scaleX(1.1553)">Beam</span>
<span class="t" style="left:217.15px;top:246px;font-size:14.4px;color:#fff;transform:scaleX(1.2022)">Energy</span>
<span class="t" style="left:356.18px;top:246px;font-size:14.4px;color:#fff;transform:scaleX(1.2446)">Updated:</span>
<span class="t" style="left:434.23px;top:246px;font-size:14.4px;color:#fff;transform:scaleX(1.2723)">01:00:42</span>
<span class="t" style="left:517.10px;top:246px;font-size:14.4px;color:#fff;transform:scaleX(1.2412)">Instantaneous Luminosity</span>
<span class="t" style="left:856.39px;top:246px;font-size:14.4px;color:#fff;transform:scaleX(1.2357)">Updated:</span>
<span class="t" style="left:933.92px;top:246px;font-size:14.4px;color:#fff;transform:scaleX(1.2814)">01:00:39</span>
<span class="t" style="left:61.48px;top:482px;font-size:11.8px;color:#000;font-weight:bold;-webkit-text-stroke:0;transform:scaleX(1.1502)">0E0</span>
<span class="t" style="left:53.29px;top:457px;font-size:11.8px;color:#000;font-weight:bold;-webkit-text-stroke:0;transform:scaleX(1.1718)">5E13</span>
<span class="t" style="left:52.88px;top:433px;font-size:11.8px;color:#000;font-weight:bold;-webkit-text-stroke:0;transform:scaleX(1.1718)">1E14</span>
<span class="t" style="left:40.97px;top:409px;font-size:11.8px;color:#000;font-weight:bold;-webkit-text-stroke:0;transform:scaleX(1.1819)">1.5E14</span>
<span class="t" style="left:53.24px;top:385px;font-size:11.8px;color:#000;font-weight:bold;-webkit-text-stroke:0;transform:scaleX(1.1589)">2E14</span>
<span class="t" style="left:41.33px;top:361px;font-size:11.8px;color:#000;font-weight:bold;-webkit-text-stroke:0;transform:scaleX(1.1723)">2.5E14</span>
<span class="t" style="left:53.41px;top:337px;font-size:11.8px;color:#000;font-weight:bold;-webkit-text-stroke:0;transform:scaleX(1.1525)">3E14</span>
<span class="t" style="left:41.51px;top:313px;font-size:11.8px;color:#000;font-weight:bold;-webkit-text-stroke:0;transform:scaleX(1.1675)">3.5E14</span>
<span class="t" style="left:53.53px;top:289px;font-size:11.8px;color:#000;font-weight:bold;-webkit-text-stroke:0;transform:scaleX(1.1483)">4E14</span>
<span class="t" style="left:133.09px;top:496px;font-size:11.8px;color:#000;font-weight:bold;-webkit-text-stroke:0;transform:scaleX(1.2471)">05:00</span>
<span class="t" style="left:191.09px;top:496px;font-size:11.8px;color:#000;font-weight:bold;-webkit-text-stroke:0;transform:scaleX(1.2471)">09:00</span>
<span class="t" style="left:249.77px;top:496px;font-size:11.8px;color:#000;font-weight:bold;-webkit-text-stroke:0;transform:scaleX(1.2579)">13:00</span>
<span class="t" style="left:307.77px;top:496px;font-size:11.8px;color:#000;font-weight:bold;-webkit-text-stroke:0;transform:scaleX(1.2579)">17:00</span>
<span class="t" style="left:367.15px;top:496px;font-size:11.8px;color:#000;font-weight:bold;-webkit-text-stroke:0;transform:scaleX(1.2450)">21:00</span>
<span class="t" style="left:425.09px;top:496px;font-size:11.8px;color:#000;font-weight:bold;-webkit-text-stroke:0;transform:scaleX(1.2471)">01:00</span>
<span class="t" style="left:452.52px;top:482px;font-size:11.8px;color:#000;font-weight:bold;-webkit-text-stroke:0;transform:scaleX(1.2920)">0</span>
<span class="t" style="left:452.24px;top:450px;font-size:11.8px;color:#000;font-weight:bold;-webkit-text-stroke:0;transform:scaleX(1.2317)">1000</span>
<span class="t" style="left:452.61px;top:420px;font-size:11.8px;color:#000;font-weight:bold;-webkit-text-stroke:0;transform:scaleX(1.2171)">2000</span>
<span class="t" style="left:452.80px;top:390px;font-size:11.8px;color:#000;font-weight:bold;-webkit-text-stroke:0;transform:scaleX(1.2100)">3000</span>
<span class="t" style="left:452.92px;top:360px;font-size:11.8px;color:#000;font-weight:bold;-webkit-text-stroke:0;transform:scaleX(1.2053)">4000</span>
<span class="t" style="left:452.67px;top:328px;font-size:11.8px;color:#000;font-weight:bold;-webkit-text-stroke:0;transform:scaleX(1.2147)">5000</span>
<span class="t" style="left:452.61px;top:298px;font-size:11.8px;color:#000;font-weight:bold;-webkit-text-stroke:0;transform:scaleX(1.2171)">6000</span>
<span class="t" style="left:452.49px;top:268px;font-size:11.8px;color:#000;font-weight:bold;-webkit-text-stroke:0;transform:scaleX(1.2219)">7000</span>
<span class="t" style="left:23px;top:407.94px;font-size:13.4px;color:#000;font-weight:bold;-webkit-text-stroke:0;transform:rotate(-90deg) scaleX(1.1188)">Intensity</span>
<span class="t" style="left:489px;top:422.29px;font-size:13.4px;color:#000;font-weight:bold;-webkit-text-stroke:0;transform:rotate(-90deg) scaleX(1.0674)">Energy (GeV)</span>
<span class="t" style="left:572.35px;top:456px;font-size:11.8px;color:#000;font-weight:bold;-webkit-text-stroke:0;transform:scaleX(1.2212)">0</span>
<span class="t" style="left:548.37px;top:417px;font-size:11.8px;color:#000;font-weight:bold;-webkit-text-stroke:0;transform:scaleX(1.2187)">5000</span>
<span class="t" style="left:540.14px;top:379px;font-size:11.8px;color:#000;font-weight:bold;-webkit-text-stroke:0;transform:scaleX(1.2259)">10000</span>
<span class="t" style="left:540.14px;top:340px;font-size:11.8px;color:#000;font-weight:bold;-webkit-text-stroke:0;transform:scaleX(1.2259)">15000</span>
<span class="t" style="left:540.51px;top:302px;font-size:11.8px;color:#000;font-weight:bold;-webkit-text-stroke:0;transform:scaleX(1.2144)">20000</span>
<span class="t" style="left:620.19px;top:470px;font-size:11.8px;color:#000;font-weight:bold;-webkit-text-stroke:0;transform:scaleX(1.2471)">04:00</span>
<span class="t" style="left:670.19px;top:470px;font-size:11.8px;color:#000;font-weight:bold;-webkit-text-stroke:0;transform:scaleX(1.2471)">07:00</span>
<span class="t" style="left:719.87px;top:470px;font-size:11.8px;color:#000;font-weight:bold;-webkit-text-stroke:0;transform:scaleX(1.2579)">10:00</span>
<span class="t" style="left:769.87px;top:470px;font-size:11.8px;color:#000;font-weight:bold;-webkit-text-stroke:0;transform:scaleX(1.2579)">13:00</span>
<span class="t" style="left:820.87px;top:470px;font-size:11.8px;color:#000;font-weight:bold;-webkit-text-stroke:0;transform:scaleX(1.2579)">16:00</span>
<span class="t" style="left:870.87px;top:470px;font-size:11.8px;color:#000;font-weight:bold;-webkit-text-stroke:0;transform:scaleX(1.2579)">19:00</span>
<span class="t" style="left:921.25px;top:470px;font-size:11.8px;color:#000;font-weight:bold;-webkit-text-stroke:0;transform:scaleX(1.2450)">22:00</span>
<span class="t" style="left:971.19px;top:470px;font-size:11.8px;color:#000;font-weight:bold;-webkit-text-stroke:0;transform:scaleX(1.2471)">01:00</span>
<span class="t" style="left:523px;top:452.89px;font-size:13.4px;color:#000;font-weight:bold;-webkit-text-stroke:0;transform:rotate(-90deg) scaleX(1.0685)">Luminosity / 1e30 cm-2s-1</span>
<span class="t" style="left:548.07px;top:493px;font-size:9.9px;color:#000;font-weight:bold;-webkit-text-stroke:0;transform:scaleX(1.1700)">ATLAS</span>
<span class="t" style="left:620.09px;top:493px;font-size:9.9px;color:#000;font-weight:bold;-webkit-text-stroke:0;transform:scaleX(1.0361)">ALICE</span>
<span class="t" style="left:685.59px;top:493px;font-size:9.9px;color:#000;font-weight:bold;-webkit-text-stroke:0;transform:scaleX(1.0355)">CMS</span>
<span class="t" style="left:740.79px;top:493px;font-size:9.9px;color:#000;font-weight:bold;-webkit-text-stroke:0;transform:scaleX(1.0850)">LHCb</span>
<span class="t" style="left:1.95px;top:555px;font-size:20.6px;color:#ff0;transform:scaleX(1.0900)">Comments</span>
<span class="t" style="left:117.95px;top:555px;font-size:20.6px;color:#ff0;transform:scaleX(1.0895)">(19-Mar-2026</span>
<span class="t" style="left:259.36px;top:555px;font-size:20.6px;color:#ff0;transform:scaleX(1.1798)">22:39:11)</span>
<span class="t" style="left:142.59px;top:605px;font-size:21.2px;color:#fff;transform:scaleX(1.2231)">***</span>
<span class="t" style="left:179.17px;top:605px;font-size:21.2px;color:#fff;transform:scaleX(0.9530)">STABLE</span>
<span class="t" style="left:262.76px;top:605px;font-size:21.2px;color:#fff;transform:scaleX(0.9306)">BEAMS</span>
<span class="t" style="left:338.90px;top:605px;font-size:21.2px;color:#fff;transform:scaleX(1.1982)">***</span>
<span class="t" style="left:217.79px;top:701px;font-size:21.2px;color:#fff;transform:scaleX(0.9392)">XRPs IN</span>
<span class="t" style="left:7.80px;top:737px;font-size:17.9px;color:#ff0;transform:scaleX(0.9825)">AFS:</span>
<span class="t" style="left:53.10px;top:737px;font-size:17.9px;color:#ff0;transform:scaleX(1.0774)">25ns_2460b_2448_2092_2239_144bpi_20inj</span>
<span class="t" style="left:517.32px;top:530px;font-size:17.7px;color:#fff;transform:scaleX(1.0676)">BIS status and SMP flags</span>
<span class="t" style="left:891.49px;top:530px;font-size:17.7px;color:#fff;transform:scaleX(1.0895)">B1</span>
<span class="t" style="left:957.09px;top:530px;font-size:17.7px;color:#fff;transform:scaleX(1.0230)">B2</span>
<span class="t" style="left:563.96px;top:559px;font-size:17.7px;color:#fff;transform:scaleX(1.1135)">Link Status of Beam Permits</span>
<span class="t" style="left:880.90px;top:559px;font-size:17.7px;color:#000;transform:scaleX(1.2289)">true</span>
<span class="t" style="left:952.90px;top:559px;font-size:17.7px;color:#000;transform:scaleX(1.2289)">true</span>
<span class="t" style="left:598.87px;top:588px;font-size:17.7px;color:#fff;transform:scaleX(1.1205)">Global Beam Permit</span>
<span class="t" style="left:880.90px;top:588px;font-size:17.7px;color:#000;transform:scaleX(1.2289)">true</span>
<span class="t" style="left:952.90px;top:588px;font-size:17.7px;color:#000;transform:scaleX(1.2289)">true</span>
<span class="t" style="left:633.39px;top:617px;font-size:17.7px;color:#fff;transform:scaleX(1.1101)">Setup Beam</span>
<span class="t" style="left:879.00px;top:617px;font-size:17.7px;color:#000;transform:scaleX(1.0908)">false</span>
<span class="t" style="left:951.00px;top:617px;font-size:17.7px;color:#000;transform:scaleX(1.0908)">false</span>
<span class="t" style="left:619.80px;top:646px;font-size:17.7px;color:#fff;transform:scaleX(1.0878)">Beam Presence</span>
<span class="t" style="left:880.90px;top:646px;font-size:17.7px;color:#000;transform:scaleX(1.2289)">true</span>
<span class="t" style="left:952.90px;top:646px;font-size:17.7px;color:#000;transform:scaleX(1.2289)">true</span>
<span class="t" style="left:556.23px;top:674px;font-size:17.7px;color:#fff;transform:scaleX(1.1384)">Moveable Devices Allowed In</span>
<span class="t" style="left:880.90px;top:674px;font-size:17.7px;color:#000;transform:scaleX(1.2289)">true</span>
<span class="t" style="left:952.90px;top:674px;font-size:17.7px;color:#000;transform:scaleX(1.2289)">true</span>
<span class="t" style="left:627.40px;top:703px;font-size:17.7px;color:#fff;transform:scaleX(1.0909)">Stable Beams</span>
<span class="t" style="left:880.90px;top:703px;font-size:17.7px;color:#000;transform:scaleX(1.2289)">true</span>
<span class="t" style="left:952.90px;top:703px;font-size:17.7px;color:#000;transform:scaleX(1.2289)">true</span>
<span class="t" style="left:519.13px;top:739px;font-size:17.7px;color:#fff;transform:scaleX(1.0658)">PM Status B1</span>
<span class="t" style="left:655.59px;top:740px;font-size:17.7px;color:#000;transform:scaleX(1.0231)">ENABLED</span>
<span class="t" style="left:772.82px;top:739px;font-size:17.7px;color:#fff;transform:scaleX(1.0668)">PM Status B2</span>
<span class="t" style="left:914.09px;top:740px;font-size:17.7px;color:#000;transform:scaleX(1.0169)">ENABLED</span>
<div class="b" style="left:1008px;top:243px;width:4px;height:267px;background:#000"></div>
</div>
</body></html>
